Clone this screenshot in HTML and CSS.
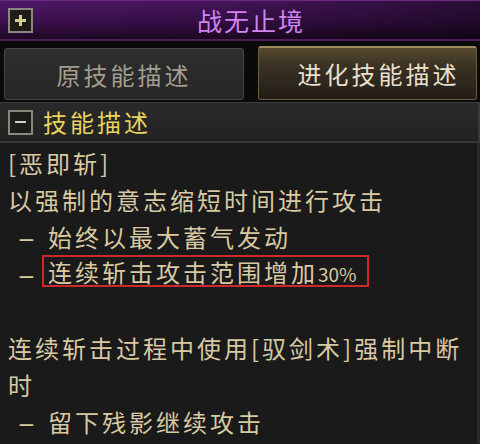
FILE: index.html
```html
<!DOCTYPE html>
<html>
<head>
<meta charset="utf-8">
<link rel="stylesheet" href="styles.css">
</head>
<body>
<div class="window">
  <div class="titlebar">
    <div class="box plus"><span class="bar h"></span><span class="bar v"></span></div>
    <div class="title">战无止境</div>
  </div>
  <div class="tabs">
    <div class="tab off">原技能描述</div>
    <div class="tab on">进化技能描述</div>
  </div>
  <div class="section">
    <div class="box minus"><span class="bar h"></span></div>
    <div class="section-title">技能描述</div>
  </div>
  <div class="content">
    <div class="line">[恶即斩]</div>
    <div class="line">以强制的意志缩短时间进行攻击</div>
    <div class="line sub"><span class="dash"><span class="dash-g">-</span></span>始终以最大蓄气发动</div>
    <div class="line sub"><span class="dash"><span class="dash-g">-</span></span><span class="hl">连续斩击攻击范围增加<span class="num">30%</span></span></div>
    <div class="line"></div>
    <div class="line">连续斩击过程中使用[驭剑术]强制中断</div>
    <div class="line">时</div>
    <div class="line sub"><span class="dash"><span class="dash-g">-</span></span>留下残影继续攻击</div>
  </div>
</div>
</body>
</html>
```
FILE: styles.css
```css
* { box-sizing: border-box; }
html, body { margin: 0; padding: 0; }
body {
  width: 480px;
  height: 444px;
  overflow: hidden;
  background: #0b0a0b;
  font-family: "Noto Sans CJK SC", "Noto Sans", sans-serif;
}
.window {
  width: 480px;
  height: 444px;
  display: flex;
  flex-direction: column;
}
.titlebar {
  height: 41px;
  position: relative;
  display: flex;
  align-items: center;
  justify-content: center;
  background: linear-gradient(180deg, #4e1866 0%, #3c104e 55%, #1e0824 100%);
  background-color: #3a0f4c;
  border-top: 1px solid #6a2a80;
  border-bottom: 2px solid #4c1f5a;
}
.titlebar::before {
  content: "";
  position: absolute;
  inset: 0;
  background: linear-gradient(90deg, rgba(0,0,0,0) 0%, rgba(0,0,0,0.15) 50%, rgba(0,0,0,0.45) 100%);
}
.title {
  position: relative;
  color: #d084f0;
  font-size: 25px;
  letter-spacing: 2px;
  line-height: 1;
  margin-top: 1px;
  margin-left: 22px;
}
.box {
  width: 25px;
  height: 25px;
  border: 2px solid #8a8680;
  background: #1e1c18;
  position: relative;
}
.plus {
  position: absolute;
  left: 8px;
  top: 7px;
  z-index: 1;
}
.bar {
  position: absolute;
  background: #d6cf8a;
}
.bar.h { left: 5px; right: 5px; top: 9px; height: 3px; }
.bar.v { top: 5px; bottom: 5px; left: 9px; width: 3px; }
.tabs {
  display: flex;
  gap: 14px;
  padding: 5px 3px 2px 4px;
  height: 61px;
}
.tab {
  flex: none;
  display: flex;
  align-items: center;
  justify-content: center;
  font-size: 24px;
  letter-spacing: 3px;
  border-radius: 3px;
}
.tab.off {
  width: 240px;
  margin-top: 2px;
  background: linear-gradient(180deg, #2e2e2e 0%, #262626 100%);
  border: 1px solid #464646;
  color: #a39d8d;
}
.tab.on {
  width: 219px;
  padding-left: 22px;
  background: linear-gradient(180deg, #574a30 0%, #3a3124 35%, #221d17 100%);
  border: 1px solid #6a5c3e;
  border-top: 2px solid #9c8a5c;
  color: #e8e0cc;
}
.section {
  height: 41px;
  display: flex;
  align-items: center;
  gap: 10px;
  padding-left: 8px;
  background: linear-gradient(180deg, #2a2a2a 0%, #222 100%);
  border-top: 1px solid #3c3c3c;
  border-bottom: 2px solid #383838;
  border-right: 2px solid #3a3a3a;
}
.minus { width: 25px; height: 25px; }
.minus .bar.h { background: #cfcfcf; height: 2px; top: 9px; }
.section-title {
  color: #e8d35e;
  font-size: 24px;
  letter-spacing: 3px;
  line-height: 1;
}
.content {
  flex: 1;
  background: #1a1a1a;
  border-right: 3px solid #2a2a2a;
  padding: 1px 0 0 8px;
  color: #d8c9a2;
  font-size: 24px;
  letter-spacing: 3px;
}
.line {
  height: 37px;
  line-height: 37px;
  white-space: nowrap;
}
.dash {
  display: inline-block;
  width: 40px;
  padding-left: 16px;
}
.dash-g {
  display: inline-block;
  transform: scaleX(2.2);
}
.hl {
  display: inline-block;
  height: 32px;
  line-height: 30px;
  margin-left: -6px;
  padding: 0 10px 0 4px;
  border: 2px solid #d0282a;
  vertical-align: 2px;
}
.num {
  font-size: 19px;
  letter-spacing: 0;
}
```
